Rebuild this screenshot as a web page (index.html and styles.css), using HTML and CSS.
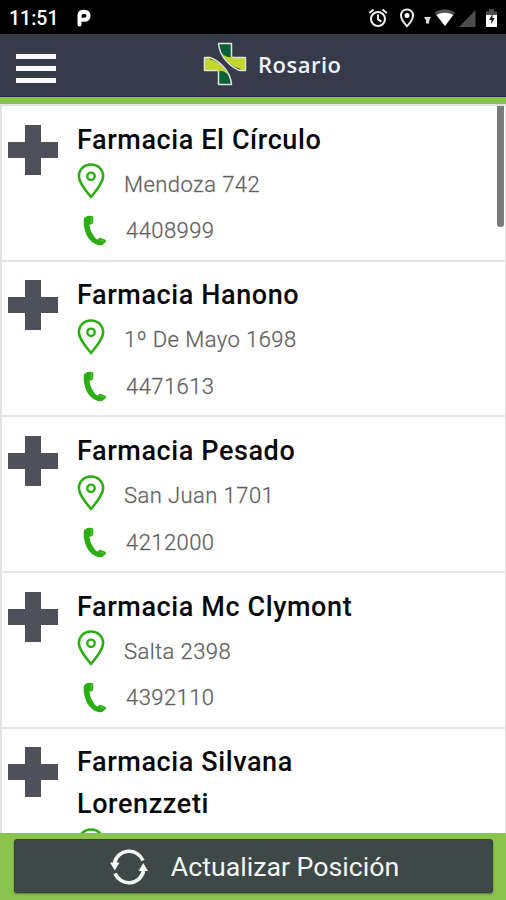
FILE: index.html
```html
<!DOCTYPE html>
<html lang="es">
<head>
    <meta charset="UTF-8">
    <meta name="viewport" content="width=device-width, initial-scale=1.0">
    <title>Farmacias Rosario</title>
    <link rel="stylesheet" href="styles.css">
</head>
<body>
    <svg class="symbols" width="0" height="0">
        <symbol id="cross" viewBox="0 0 50 50">
            <path d="M17 0h16v17h17v16H33v17H17V33H0V17h17z" fill="#50505d"/>
        </symbol>
        <symbol id="pin" viewBox="0 0 28 36">
            <path d="M14 1.500C7 1.500 1.900 6.500 1.900 13.200C1.900 20.500 9.500 28 14 34C18.500 28 26.100 20.500 26.100 13.200C26.100 6.500 21 1.500 14 1.500z" fill="none" stroke="#2bae13" stroke-width="2.600" stroke-linejoin="round"/>
            <circle cx="14" cy="13.300" r="3.700" fill="none" stroke="#2bae13" stroke-width="2.400"/>
        </symbol>
        <symbol id="phone" viewBox="0 0 24 31">
            <path d="M2.500 2Q5 .4 9 1Q10.500 1.300 10.400 3L10.200 7.500Q9.800 9.600 6.400 9.800Q7.300 17.500 13.200 24Q14.500 25.200 15.600 23.500Q16.500 22.300 18 23L22.300 24.800Q23.800 25.700 22.700 27.200Q19.500 30.600 15.800 30.200Q8 28.500 3.500 20Q.2 12 .7 5Q.8 3 2.500 2z" fill="#2bae13"/>
            <path d="M8.300 2v6.500M17 24.700l4.500 2" stroke="#62c64e" stroke-width="1"/>
        </symbol>
    </svg>

    <div class="status-bar">
        <span class="clock">11:51</span>
        <svg class="parking" width="14" height="18" viewBox="0 0 14 18">
            <path d="M2.500 15.500V6.500Q2.500 2.700 7 2.700Q11.500 2.700 11.500 6.700Q11.500 10.800 7 10.800H4.500" fill="none" stroke="#fff" stroke-width="4" stroke-linecap="round" stroke-linejoin="round"/>
        </svg>
        <svg class="status-icons" width="136" height="22" viewBox="0 0 136 22">
            <g fill="none" stroke="#f2f2f2" stroke-width="2">
                <circle cx="11" cy="12" r="7"/>
                <path d="M11 7.500V12.300l3.300 2.300M2.300 6l4.200-3.500M19.700 6l-4.200-3.500"/>
                <path d="M40 2.500c-3.600 0-6 2.500-6 5.900 0 4.200 6 10.800 6 10.800s6-6.600 6-10.800C46 5 43.600 2.500 40 2.500z"/>
            </g>
            <circle cx="40" cy="8.600" r="2.500" fill="#fff"/>
            <path d="M57 10h7l-1.800 3.200v3.300h-3.200v-3.300z" fill="#ddd"/>
            <path d="M67.500 5.500Q77.500 -1 88 5.500L78 19z" fill="#555"/>
            <path d="M69.300 8Q78 3.500 86.300 8L78 19z" fill="#fff"/>
            <path d="M108.500 3v17H92z" fill="#4d4d4d"/>
            <path d="M119 4.500h3V2h5v2.500h3V9h-11z" fill="#4d4d4d"/>
            <path d="M119 8h11v12h-11z" fill="#fff"/>
            <path d="M125.500 7l-3.500 6h2.300v4l3.500-6h-2.300z" fill="#222"/>
        </svg>
    </div>

    <header class="header">
        <div class="menu">
            <span></span>
            <span></span>
            <span></span>
        </div>
        <div class="brand">
            <svg width="44" height="44" viewBox="0 0 44 44">
                <path d="M15.500 1.500H28.500V18L24 20Q16 13 15.500 1.500z" fill="#0b6238"/>
                <path d="M28.500 42.500H15.500V26L20 24Q28 31 28.500 42.500z" fill="#0b6238"/>
                <path d="M16 6Q19 15 28 15.500H42.500V28.500H37C29 27 19 18 16 6z" fill="#c3d62a"/>
                <path d="M28 38Q25 29 16 28.500H1.500V15.500H7C15 17 25 26 28 38z" fill="#c3d62a"/>
                <path d="M15.500 1.500C15.500 17 28 27 37 28.500M28.500 42.500C28.500 27 16 17 7 15.500" fill="none" stroke="#353b49" stroke-width="3.500"/>
                <g fill="none" stroke="#dce5dc" stroke-width="1.500" stroke-linejoin="round">
                    <path d="M15.500 1.500H28.500V15.500H42.500V28.500H37C29.500 26 16.500 16 15.500 1.500z"/>
                    <path d="M28.500 42.500H15.500V28.500H1.500V15.500H7C14.500 18 27.500 28 28.500 42.500z"/>
                </g>
                <path d="M28.500 14.500v2M15.500 27.500v2" stroke="#c3d62a" stroke-width="2"/>
            </svg>
            <h1>Rosario</h1>
        </div>
    </header>

    <main class="list">
        <div class="scroll-thumb"></div>
        <article class="farmacia">
            <svg class="cross"><use href="#cross"/></svg>
            <div class="info">
                <h2>Farmacia El Círculo</h2>
                <p><svg class="pin"><use href="#pin"/></svg>Mendoza 742</p>
                <p class="tel"><svg class="phone"><use href="#phone"/></svg>4408999</p>
            </div>
        </article>
        <article class="farmacia">
            <svg class="cross"><use href="#cross"/></svg>
            <div class="info">
                <h2>Farmacia Hanono</h2>
                <p><svg class="pin"><use href="#pin"/></svg>1º De Mayo 1698</p>
                <p class="tel"><svg class="phone"><use href="#phone"/></svg>4471613</p>
            </div>
        </article>
        <article class="farmacia">
            <svg class="cross"><use href="#cross"/></svg>
            <div class="info">
                <h2>Farmacia Pesado</h2>
                <p><svg class="pin"><use href="#pin"/></svg>San Juan 1701</p>
                <p class="tel"><svg class="phone"><use href="#phone"/></svg>4212000</p>
            </div>
        </article>
        <article class="farmacia">
            <svg class="cross"><use href="#cross"/></svg>
            <div class="info">
                <h2>Farmacia Mc Clymont</h2>
                <p><svg class="pin"><use href="#pin"/></svg>Salta 2398</p>
                <p class="tel"><svg class="phone"><use href="#phone"/></svg>4392110</p>
            </div>
        </article>
        <article class="farmacia">
            <svg class="cross"><use href="#cross"/></svg>
            <div class="info">
                <h2>Farmacia Silvana<br>Lorenzzeti</h2>
                <p><svg class="pin"><use href="#pin"/></svg></p>
            </div>
        </article>
    </main>

    <footer class="footer">
        <button class="update">
            <svg width="38" height="36" viewBox="0 0 38 36">
                <path d="M4.500 14A15 15 0 0 1 33 11.500M33.500 22A15 15 0 0 1 5 24.500" fill="none" stroke="#f4f8f5" stroke-width="3.600"/>
                <path d="M0 13.500h9.500L4.800 21.500zM28.500 22h9.500L33.300 14z" fill="#f4f8f5"/>
            </svg>
            Actualizar Posición
        </button>
    </footer>
</body>
</html>
```
FILE: styles.css
```css
* {
    margin: 0;
    padding: 0;
    box-sizing: border-box;
}
body {
    font-family: Roboto, "Liberation Sans", sans-serif;
    background: #fff;
    height: 900px;
    display: flex;
    flex-direction: column;
    overflow: hidden;
}
svg {
    display: block;
    flex-shrink: 0;
}
.symbols {
    position: absolute;
}
.status-bar {
    height: 34px;
    flex-shrink: 0;
    background: #000;
    color: #fff;
    display: flex;
    align-items: center;
    padding: 2px 3px 0 9px;
}
.clock {
    width: 68px;
    font-size: 19.5px;
    font-weight: 500;
}
.status-icons {
    margin-left: auto;
}
.header {
    height: 70px;
    flex-shrink: 0;
    background: #353b49;
    border-bottom: 7px solid #8bc34f;
    display: flex;
    align-items: center;
    padding: 0 16px;
    box-shadow: inset 0 -1px 0 #29264f;
}
.menu {
    width: 40px;
    padding-top: 5px;
    display: flex;
    flex-direction: column;
    gap: 7px;
}
.menu span {
    height: 5px;
    background: #f7f9ff;
}
.brand {
    display: flex;
    align-items: center;
    margin-left: 147px;
    padding-bottom: 3px;
    gap: 11px;
}
.brand h1 {
    font-family: "Open Sans", sans-serif;
    font-size: 22px;
    font-weight: 600;
    letter-spacing: 0.5px;
    padding-bottom: 1px;
    color: #eef2fc;
}
.list {
    position: relative;
    flex: 1;
    min-height: 0;
    overflow: hidden;
    border: solid #e2e2e2;
    border-width: 2px 1px 0 2px;
}
.scroll-thumb {
    position: absolute;
    top: -2px;
    right: 1px;
    width: 7px;
    height: 123px;
    background: #7b7b7b;
    border-radius: 0 0 3px 3px;
}
.farmacia {
    display: flex;
    height: 155.7px;
    padding: 12.5px 0 0 6px;
    border-bottom: 2px solid #e6e6e6;
}
.farmacia:last-child {
    height: auto;
}
.cross {
    width: 50px;
    height: 50px;
    margin: 6px 19px 0 0;
}
.info h2 {
    font-size: 27px;
    font-weight: 500;
    line-height: 42px;
    letter-spacing: 0.6px;
    color: #080808;
}
.info p {
    display: flex;
    align-items: center;
    height: 46.5px;
    padding-top: 1px;
    font-size: 22px;
    font-weight: 300;
    letter-spacing: 0.43px;
    color: #4c4c4c;
    -webkit-text-stroke: 0.3px #8a8a8a;
}
.pin {
    width: 28px;
    height: 36px;
    margin: -6px 19px 0 0;
}
.phone {
    width: 24px;
    height: 31px;
    margin: 0 19px 0 6px;
}
.footer {
    height: 67px;
    flex-shrink: 0;
    background: #8bc34f;
    padding: 6px 13px 6px 14px;
}
.update {
    width: 100%;
    height: 54px;
    display: flex;
    align-items: center;
    justify-content: center;
    gap: 23px;
    border: 1px solid #36403f;
    border-radius: 3px;
    background: #3e4847;
    box-shadow: 0 1px 2px #55733a;
    color: #f4f8f5;
    font-family: inherit;
    font-size: 26.7px;
    padding: 2px 0 0 2px;
}
```
